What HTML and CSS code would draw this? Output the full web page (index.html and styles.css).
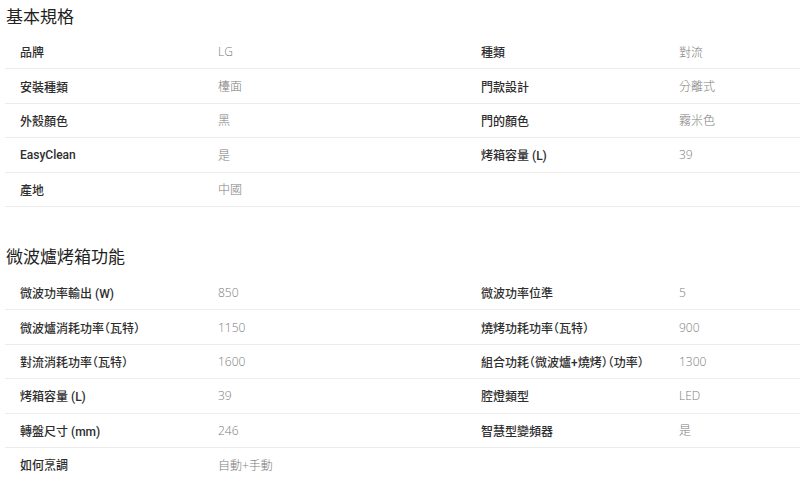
FILE: index.html
```html
<!DOCTYPE html>
<html lang="zh-Hant">
<head>
<meta charset="utf-8">
<link rel="stylesheet" href="styles.css">
</head>
<body>
<div class="page">
  <section class="spec">
    <h2 class="spec-title">基本規格</h2>
    <div class="spec-grid">
      <div class="row"><span class="label">品牌</span><span class="value">LG</span><span class="label">種類</span><span class="value">對流</span></div>
      <div class="row"><span class="label">安裝種類</span><span class="value">檯面</span><span class="label">門款設計</span><span class="value">分離式</span></div>
      <div class="row"><span class="label">外殼顏色</span><span class="value">黑</span><span class="label">門的顏色</span><span class="value">霧米色</span></div>
      <div class="row"><span class="label">EasyClean</span><span class="value">是</span><span class="label">烤箱容量 (L)</span><span class="value">39</span></div>
      <div class="row"><span class="label">產地</span><span class="value">中國</span><span class="label"></span><span class="value"></span></div>
    </div>
  </section>
  <section class="spec spec-second">
    <h2 class="spec-title">微波爐烤箱功能</h2>
    <div class="spec-grid">
      <div class="row"><span class="label">微波功率輸出 (W)</span><span class="value">850</span><span class="label">微波功率位準</span><span class="value">5</span></div>
      <div class="row"><span class="label">微波爐消耗功率（瓦特）</span><span class="value">1150</span><span class="label">燒烤功耗功率（瓦特）</span><span class="value">900</span></div>
      <div class="row"><span class="label">對流消耗功率（瓦特）</span><span class="value">1600</span><span class="label">組合功耗（微波爐+燒烤）（功率）</span><span class="value">1300</span></div>
      <div class="row"><span class="label">烤箱容量 (L)</span><span class="value">39</span><span class="label">腔燈類型</span><span class="value">LED</span></div>
      <div class="row"><span class="label">轉盤尺寸 (mm)</span><span class="value">246</span><span class="label">智慧型變頻器</span><span class="value">是</span></div>
      <div class="row"><span class="label">如何烹調</span><span class="value">自動+手動</span><span class="label"></span><span class="value"></span></div>
    </div>
  </section>
</div>
</body>
</html>
```

FILE: styles.css
```css
html, body {
  margin: 0;
  padding: 0;
  background: #ffffff;
  overflow: hidden;
}
body {
  font-family: "Open Sans", "Noto Sans CJK TC", sans-serif;
  color: #333333;
}
.page {
  width: 800px;
  height: 480px;
  overflow: hidden;
  padding-left: 5px;
  padding-top: 1px;
  box-sizing: border-box;
}
.spec-title {
  margin: 0;
  padding-left: 1px;
  height: 34px;
  line-height: 32px;
  font-size: 17px;
  font-weight: 400;
  color: #222222;
}
.spec-second {
  margin-top: 34px;
}
.spec-second .spec-title {
  height: 35px;
  line-height: 31px;
}
.row {
  display: grid;
  grid-template-columns: 198px 263px 198px 1fr;
  height: 34.4px;
  align-items: center;
  padding-left: 15px;
  border-bottom: 1px solid #ececec;
  box-sizing: border-box;
  width: 900px;
}
.label {
  font-family: "Roboto", "Noto Sans CJK TC", sans-serif;
  font-size: 12px;
  font-weight: 500;
  color: #2e2e2e;
  white-space: nowrap;
  font-feature-settings: "halt";
}
.value {
  font-size: 12px;
  font-weight: 300;
  color: #7c7c7c;
  white-space: nowrap;
}
```
